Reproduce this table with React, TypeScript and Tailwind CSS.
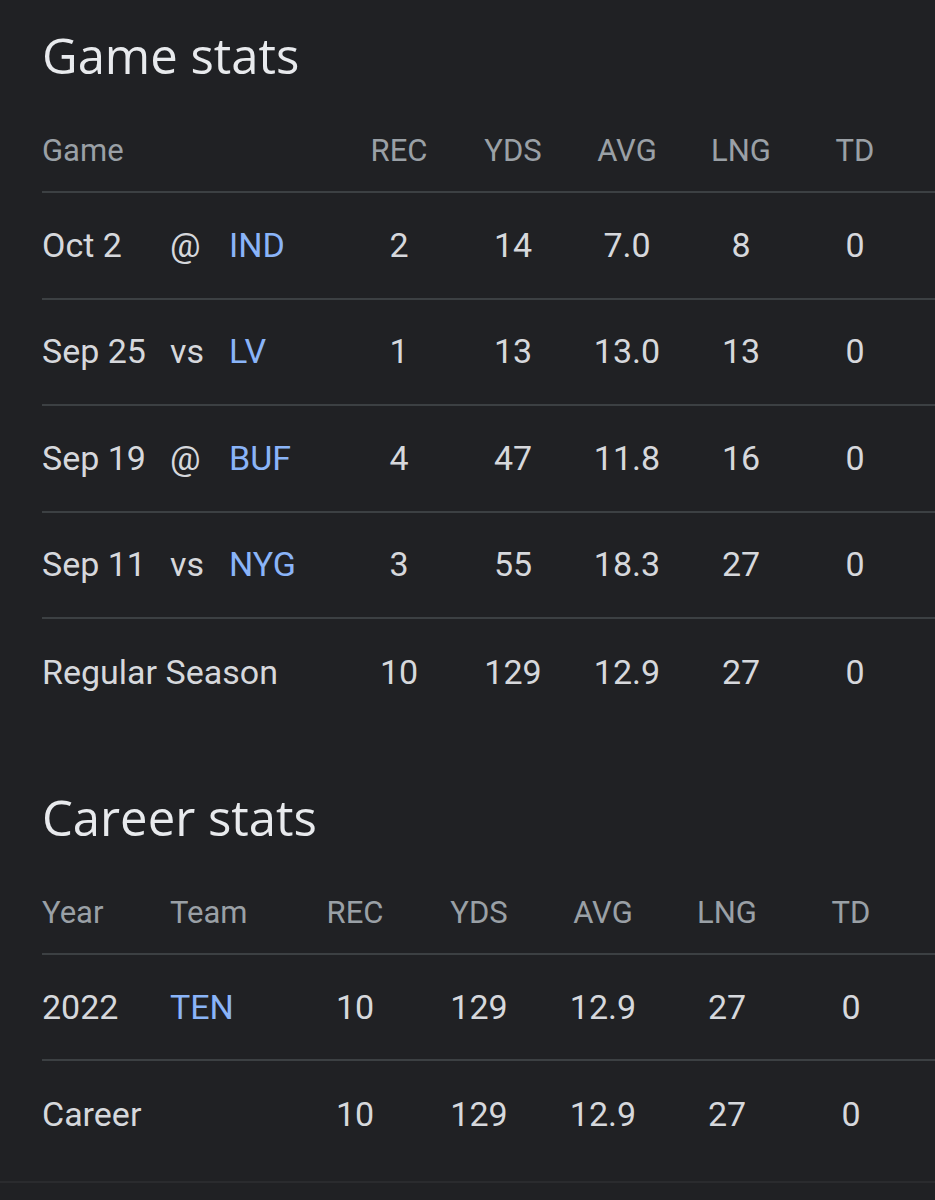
const gameRows = [
    { date: "Oct 2", at: "@", team: "IND", rec: "2", yds: "14", avg: "7.0", lng: "8", td: "0" },
    { date: "Sep 25", at: "vs", team: "LV", rec: "1", yds: "13", avg: "13.0", lng: "13", td: "0" },
    { date: "Sep 19", at: "@", team: "BUF", rec: "4", yds: "47", avg: "11.8", lng: "16", td: "0" },
    { date: "Sep 11", at: "vs", team: "NYG", rec: "3", yds: "55", avg: "18.3", lng: "27", td: "0" },
];

const careerRows = [
    { year: "2022", team: "TEN", rec: "10", yds: "129", avg: "12.9", lng: "27", td: "0" },
    { year: "Career", team: "", rec: "10", yds: "129", avg: "12.9", lng: "27", td: "0" },
];

const gameCols = "grid grid-cols-[300px_114px_114px_114px_114px_114px] items-center";
const careerCols = "grid grid-cols-[128px_123px_124px_124px_124px_124px_124px] items-center";

const SectionTitle = ({ label, className }: { label: string; className?: string }) => (
    <h2
        className={`pb-6 text-[49px] leading-[56px] font-medium text-[#e8eaed] ${className ?? ""}`}
        style={{ fontFamily: '"Open Sans", sans-serif' }}
    >
        {label}
    </h2>
);

const Num = ({ children }: { children: React.ReactNode }) => (
    <div className="text-center">{children}</div>
);

export default function App() {
    return (
        <div
            className="min-h-[1200px] w-[935px] bg-[#202124] text-[34px] text-[#d6d8dc]"
            style={{ fontFamily: 'Roboto, "Liberation Sans", sans-serif' }}
        >
            <div className="pl-[42px]">
                <SectionTitle label="Game stats" className="pt-[27px]" />

                <div className={`${gameCols} h-[86px] border-b-2 border-[#3c4043] pt-[4px] text-[31px] text-[#9aa0a6]`}>
                    <div>Game</div>
                    <Num>REC</Num>
                    <Num>YDS</Num>
                    <Num>AVG</Num>
                    <Num>LNG</Num>
                    <Num>TD</Num>
                </div>

                {gameRows.map((r) => (
                    <div key={r.date} className={`${gameCols} h-[106.5px] border-b-2 border-[#3c4043]`}>
                        <div className="grid grid-cols-[128px_59px_1fr]">
                            <span>{r.date}</span>
                            <span>{r.at}</span>
                            <span className="text-[#8ab4f8]">{r.team}</span>
                        </div>
                        <Num>{r.rec}</Num>
                        <Num>{r.yds}</Num>
                        <Num>{r.avg}</Num>
                        <Num>{r.lng}</Num>
                        <Num>{r.td}</Num>
                    </div>
                ))}

                <div className={`${gameCols} h-[106px]`}>
                    <div>Regular Season</div>
                    <Num>10</Num>
                    <Num>129</Num>
                    <Num>12.9</Num>
                    <Num>27</Num>
                    <Num>0</Num>
                </div>

                <SectionTitle label="Career stats" className="pt-[64px]" />

                <div className={`${careerCols} h-[86px] border-b-2 border-[#3c4043] pt-[4px] text-[31px] text-[#9aa0a6]`}>
                    <div>Year</div>
                    <div>Team</div>
                    <Num>REC</Num>
                    <Num>YDS</Num>
                    <Num>AVG</Num>
                    <Num>LNG</Num>
                    <Num>TD</Num>
                </div>

                {careerRows.map((r, i) => (
                    <div
                        key={r.year}
                        className={`${careerCols} h-[106px] ${i === 0 ? "border-b-2 border-[#3c4043]" : ""}`}
                    >
                        <div>{r.year}</div>
                        <div className="text-[#8ab4f8]">{r.team}</div>
                        <Num>{r.rec}</Num>
                        <Num>{r.yds}</Num>
                        <Num>{r.avg}</Num>
                        <Num>{r.lng}</Num>
                        <Num>{r.td}</Num>
                    </div>
                ))}
            </div>
            <div className="mt-[14px] border-b-2 border-[#2a2b2e]" />
        </div>
    );
}
